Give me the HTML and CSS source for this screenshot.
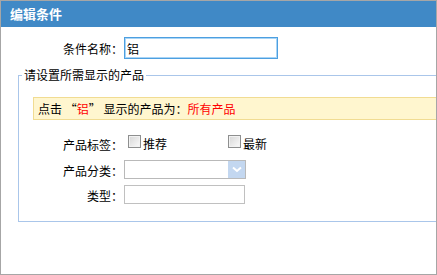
FILE: index.html
```html
<!DOCTYPE html>
<html lang="zh-CN">
<head>
  <meta charset="UTF-8" />
  <meta name="viewport" content="width=device-width, initial-scale=1.0"/>
  <title>编辑条件</title>
  <link rel="stylesheet" href="styles.css">
</head>
<body>
  <div class="dialog">
    <div class="dialog-title">编辑条件</div>
    <div class="dialog-body">
      <div class="name-row">
        <label class="name-label" for="condName">条件名称：</label>
        <input type="text" id="condName" class="name-input" value="铝">
      </div>

      <fieldset class="product-set">
        <legend>请设置所需显示的产品</legend>
        <div class="notice">点击 “<span class="hl">铝</span>” 显示的产品为：<span class="hl">所有产品</span></div>

        <div class="form-grid">
          <span class="field-label">产品标签：</span>
          <div class="checks">
            <label class="check"><input type="checkbox">推荐</label>
            <label class="check"><input type="checkbox">最新</label>
          </div>

          <span class="field-label">产品分类：</span>
          <div class="select">
            <span class="select-arrow">
              <svg width="10" height="7" viewBox="0 0 10 7"><path d="M1 1.5 L5 5 L9 1.5" fill="none" stroke="#fff" stroke-width="2"/></svg>
            </span>
          </div>

          <span class="field-label">类型：</span>
          <input type="text" class="type-input">
        </div>
      </fieldset>
    </div>
  </div>
</body>
</html>
```

FILE: styles.css
```css
:root {
  --title-blue: #4089c6;
  --frame-gray: #a6a6a6;
  --set-blue: #aac6ea;
  --notice-bg: #fff6cf;
  --notice-border: #f1dc92;
  --hl-red: #ff0000;
}

body {
  margin: 0;
  font-family: "Noto Sans CJK SC", "Liberation Sans", sans-serif;
  font-size: 12px;
  color: #000;
  background: #fff;
}

.dialog {
  width: 437px;
  height: 275px;
  box-sizing: border-box;
  border: 1px solid var(--frame-gray);
  overflow: hidden;
  background: #fff;
}

.dialog-title {
  height: 26px;
  line-height: 26px;
  padding-left: 9px;
  background: var(--title-blue);
  color: #fff;
  font-size: 13px;
  font-weight: bold;
}

.name-row {
  display: flex;
  align-items: center;
  height: 22px;
  margin-top: 10px;
}

.name-label {
  width: 122px;
  text-align: right;
}

.name-input {
  width: 154px;
  height: 22px;
  box-sizing: border-box;
  margin: 0 0 0 1px;
  padding: 0 2px;
  border: 1px solid #4d9fe0;
  box-shadow: 0 0 0 1px #a9d5f6 inset;
  font: inherit;
  outline: none;
}

.product-set {
  width: 440px;
  margin: 8px 0 0 17px;
  padding: 0 0 17px 0;
  border: 1px solid var(--set-blue);
}

.product-set legend {
  margin-left: 3px;
  padding: 0 2px;
  line-height: 16px;
}

.notice {
  margin: 14px 0 0 14px;
  padding-left: 4px;
  height: 21px;
  line-height: 21px;
  border: 1px solid var(--notice-border);
  background: var(--notice-bg);
}

.hl {
  color: var(--hl-red);
}

.form-grid {
  display: grid;
  grid-template-columns: 104px auto;
  grid-template-rows: 22px 19px 19px;
  column-gap: 1px;
  row-gap: 6px;
  align-items: center;
  margin-top: 12px;
}

.field-label {
  text-align: right;
  padding-top: 2px;
}

.checks {
  display: flex;
}

.check {
  display: flex;
  align-items: center;
  width: 100px;
}

.check input {
  appearance: none;
  width: 13px;
  height: 13px;
  box-sizing: border-box;
  margin: 0 2px 3px 4px;
  border: 1px solid #8e8f8f;
  box-shadow: 0 0 0 1px #f2f2f2 inset;
  background: linear-gradient(135deg, #d6d6d6, #fbfbfb);
}

.select {
  display: flex;
  justify-content: flex-end;
  width: 122px;
  height: 19px;
  box-sizing: border-box;
  border: 1px solid #b9b9b9;
}

.select-arrow {
  display: flex;
  align-items: center;
  justify-content: center;
  width: 17px;
  background: #c3d7f0;
}

.type-input {
  width: 121px;
  height: 19px;
  box-sizing: border-box;
  margin: 0;
  border: 1px solid #c0c0c0;
  font: inherit;
}
```
